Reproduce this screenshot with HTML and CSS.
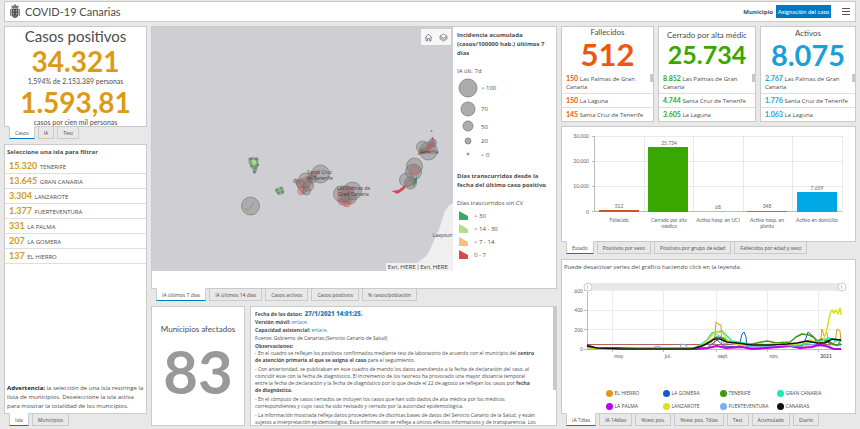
FILE: index.html
```html
<!DOCTYPE html>
<html lang="es">
<head>
    <meta charset="UTF-8">
    <title>COVID-19 Canarias</title>
    <link rel="stylesheet" href="styles.css">
</head>
<body>

    <!-- Cabecera -->
    <header class="cabecera">
        <svg class="escudo" viewBox="0 0 10 15" width="10" height="15">
            <path d="M2 4 L1 1.5 L3 2 L5 0 L7 2 L9 1.5 L8 4 Z" fill="#777"/>
            <path d="M1.5 4.5 H8.5 V10 Q8.500 13 5 14 Q1.500 13 1.500 10 Z" fill="#555"/>
            <path d="M0.500 5 V12 M9.500 5 V12" stroke="#888" fill="none"/>
            <path d="M3.500 6 V7.500 M6.500 6 V7.500 M3.500 9 V10.500 M6.500 9 V10.500 M5 11.500 V12.500" stroke="#bbb" fill="none"/>
        </svg>
        <h1>COVID-19 Canarias</h1>
        <label for="asignacion">Municipio</label>
        <button id="asignacion" class="boton-azul">Asignación del caso</button>
        <button class="menu" aria-label="Menú"><span></span><span></span><span></span></button>
    </header>

    <main class="tablero">

        <!-- Columna izquierda -->
        <div class="columna">
            <section class="panel casos">
                <h2>Casos positivos</h2>
                <p class="cifra">34.321</p>
                <p class="nota">1,594% de 2.153.389 personas</p>
                <p class="cifra">1.593,81</p>
                <p class="nota">casos por cien mil personas</p>
            </section>
            <nav class="tabs">
                <button class="activa">Casos</button>
                <button>IA</button>
                <button>Test</button>
            </nav>
            <section class="panel islas">
                <h3>Seleccione una isla para filtrar</h3>
                <ul>
                    <li><b>15.320</b> TENERIFE</li>
                    <li><b>13.645</b> GRAN CANARIA</li>
                    <li><b>3.304</b> LANZAROTE</li>
                    <li><b>1.377</b> FUERTEVENTURA</li>
                    <li><b>331</b> LA PALMA</li>
                    <li><b>207</b> LA GOMERA</li>
                    <li><b>137</b> EL HIERRO</li>
                </ul>
                <p class="aviso"><b>Advertencia:</b> la selección de una isla restringe la<br>lista de municipios. Deseleccione la isla activa<br>para mostrar la totalidad de los municipios.</p>
            </section>
            <nav class="tabs ultimas">
                <button class="activa">Isla</button>
                <button>Municipios</button>
            </nav>
        </div>

        <!-- Columna central -->
        <div class="columna">
            <section class="panel zona-mapa">
                <div class="mapa">
                    <svg viewBox="0 0 302 244" preserveAspectRatio="xMidYMid slice">
                        <rect width="302" height="244" fill="#cfced3"/>
                        <path d="M302 176 L297 179 L293 185 L290 195 L287 204 L283 212 L279 222 L275 229 L267 235 L251 244 H302 Z" fill="#efeff0"/>
                        <!-- La Palma -->
                        <path d="M97 131 L101 130 L107 131 L107 138 L105 145 L102 147 L100 140 L97 136 Z" fill="#8aa58c"/>
                        <path d="M100 133 L104 133 L105 137 L101 138 Z" fill="#9fdc8c"/>
                        <g fill="#7f9b82" stroke="#5f8265">
                            <circle cx="99" cy="132" r="1"/><circle cx="105" cy="132" r="1"/><circle cx="106" cy="138" r="1"/>
                            <circle cx="100" cy="139" r="1"/><circle cx="103" cy="145" r="1"/><circle cx="104" cy="141" r="1"/>
                        </g>
                        <!-- La Gomera -->
                        <path d="M124 162 L128 160 L133 163 L132 167 L127 168 L124 165 Z" fill="#8fb08f"/>
                        <g fill="none" stroke="#5f8265">
                            <circle cx="125" cy="163" r="1"/><circle cx="130" cy="161" r="1"/><circle cx="131" cy="165" r="1"/><circle cx="127" cy="166" r="1"/>
                        </g>
                        <!-- El Hierro -->
                        <circle class="ia" cx="99" cy="179" r="9"/>
                        <path d="M93 181 L96 184 L99 181 L102 175" fill="none" stroke="#a98f85"/>
                        <circle cx="95" cy="182" r="1" fill="#8fb06f"/>
                        <!-- Tenerife -->
                        <path d="M143 153 L151 151 L160 146 L169 142 L166 148 L160 155 L156 165 L150 167 L146 160 Z" fill="#c98f88"/>
                        <path d="M158 156 L162 158 L158 163 Z" fill="#f0b27c"/>
                        <circle class="ia" cx="169" cy="147" r="9"/>
                        <circle class="ia" cx="154" cy="153" r="7"/>
                        <circle class="ia" cx="149" cy="157" r="4"/>
                        <circle class="ia" cx="157" cy="159" r="5"/>
                        <circle class="rojo" cx="150" cy="164" r="4"/>
                        <circle class="ia" cx="155" cy="164" r="4"/>
                        <circle class="ia" cx="144" cy="154" r="2"/>
                        <circle class="ia" cx="161" cy="152" r="4"/>
                        <!-- Gran Canaria -->
                        <path d="M186 163 L193 158 L202 160 L204 169 L199 177 L193 180 L186 174 Z" fill="#cf8a88"/>
                        <circle class="ia" cx="201" cy="164" r="9"/>
                        <circle class="ia" cx="190" cy="167" r="8"/>
                        <circle class="ia" cx="199" cy="171" r="6"/>
                        <circle class="rojo" cx="190" cy="175" r="3"/>
                        <circle class="rojo" cx="196" cy="177" r="3"/>
                        <circle class="ia" cx="194" cy="171" r="4"/>
                        <!-- Fuerteventura -->
                        <path d="M240 164 L247 163 L255 157 L253 162 L246 167 Z" fill="#dc4450"/>
                        <path d="M262 153 L266 149 L265 156 L261 160 Z" fill="#2f9e64"/>
                        <circle class="ia" cx="263" cy="139" r="8"/>
                        <circle class="ia" cx="262" cy="145" r="8"/>
                        <circle class="ia" cx="255" cy="153" r="7"/>
                        <circle class="ia" cx="259" cy="156" r="6"/>
                        <circle class="rojo" cx="263" cy="144" r="5"/>
                        <circle class="rojo" cx="258" cy="156" r="3"/>
                        <!-- Lanzarote -->
                        <path d="M266 128 L268 122 L277 119 L281 110 L284 116 L277 126 Z" fill="#c97076"/>
                        <circle class="ia" cx="277" cy="124" r="9"/>
                        <circle class="ia" cx="271" cy="120" r="6"/>
                        <circle class="ia" cx="281" cy="116" r="4"/>
                        <circle class="rojo" cx="279" cy="121" r="4"/>
                        <circle cx="280" cy="104" r="1" fill="#8d8795"/>
                        <circle cx="281" cy="111" r="1" fill="#a55a62"/>
                        <g class="lugares">
                            <text x="168" y="147">Santa Cruz</text>
                            <text x="168" y="153">de Tenerife</text>
                            <text x="202" y="163">Las Palmas de</text>
                            <text x="202" y="169">Gran Canaria</text>
                            <text x="278" y="127">Arrecife</text>
                            <text x="291" y="210">Laayoun</text>
                        </g>
                    </svg>
                    <div class="controles">
                        <button aria-label="Inicio"><svg viewBox="0 0 9 9" width="9" height="9"><path d="M1 5 L4.500 1 L8 5 M2 4 V8 H3.500 V5.500 H5.500 V8 H7 V4" fill="none" stroke="#888"/></svg></button>
                        <button aria-label="Capas"><svg viewBox="0 0 9 9" width="9" height="9"><path d="M4.500 1 L8 3 L4.500 5 L1 3 Z M1 4.500 L4.500 6.500 L8 4.500 M1 6 L4.500 8 L8 6 M1 3 V6 M8 3 V6" fill="none" stroke="#999"/></svg></button>
                    </div>
                    <p class="atribucion">Esri, HERE | Esri, HERE</p>
                </div>
                <aside class="leyenda-mapa">
                    <h3>Incidencia acumulada<br>(casos/100000 hab.) últimos 7<br>días</h3>
                    <h4>IA últ. 7d</h4>
                    <ul class="circulos">
                        <li><svg width="22" height="22"><circle cx="11" cy="11" r="9"/></svg>&gt; 100</li>
                        <li><svg width="22" height="20"><circle cx="11" cy="10" r="7"/></svg>70</li>
                        <li><svg width="22" height="15"><circle cx="11" cy="7" r="5"/></svg>50</li>
                        <li><svg width="22" height="14"><circle cx="11" cy="7" r="3"/></svg>20</li>
                        <li><svg width="22" height="13"><circle cx="11" cy="6" r="1"/></svg>&lt; 0</li>
                    </ul>
                    <h3>Días transcurridos desde la<br>fecha del último caso positivo</h3>
                    <h4>Días trascurridos sin CV</h4>
                    <ul class="colores">
                        <li><svg width="10" height="9"><path d="M0 0 L9 5 V9 H0 Z" fill="#3fa568"/></svg>&gt; 30</li>
                        <li><svg width="10" height="9"><path d="M0 0 L9 5 V9 H0 Z" fill="#b5dc86"/></svg>&gt; 14 - 30</li>
                        <li><svg width="10" height="9"><path d="M0 0 L9 5 V9 H0 Z" fill="#f8bd83"/></svg>&gt; 7 - 14</li>
                        <li><svg width="10" height="9"><path d="M0 0 L9 5 V9 H0 Z" fill="#da4750"/></svg>0 - 7</li>
                    </ul>
                </aside>
            </section>
            <nav class="tabs">
                <button class="activa">IA últimos 7 días</button>
                <button>IA últimos 14 días</button>
                <button>Casos activos</button>
                <button>Casos positivos</button>
                <button>% casos/población</button>
            </nav>
            <div class="fila-inferior">
                <section class="panel municipios">
                    <h2>Municipios afectados</h2>
                    <p>83</p>
                </section>
                <section class="panel observaciones">
                    <div class="datos">
                        <p><b>Fecha de los datos: &nbsp;<strong>27/1/2021 14:01:25.</strong></b></p>
                        <p><b>Versión móvil:</b> <a href="#movil">enlace.</a></p>
                        <p><b>Capacidad asistencial:</b> <a href="#capacidad">enlace.</a></p>
                        <p>Fuente: Gobierno de Canarias (Servicio Canario de Salud)</p>
                        <p><b>Observaciones:</b></p>
                    </div>
                    <div class="notas">
                        <p>- En el cuadro se reflejan los positivos confirmados mediante test de laboratorio de acuerdo con el municipio del <b>centro</b><br><b>de atención primaria al que se asigna el caso</b> para el seguimiento.</p>
                        <p>- Con anterioridad, se publicaban en este cuadro de mando los datos atendiendo a la fecha de declaración del caso, al<br>coincidir éste con la fecha de diagnóstico. El incremento de los rastreos ha provocado una mayor distancia temporal<br>entre la fecha de declaración y la fecha de diagnóstico por lo que desde el 22 de agosto se reflejan los casos por <b>fecha</b><br><b>de diagnóstico</b>.</p>
                        <p>- En el cómputo de casos cerrados se incluyen los casos que han sido dados de alta médica por los médicos<br>correspondientes y cuyo caso ha sido revisado y cerrado por la autoridad epidemiológica.</p>
                        <p>- La información mostrada refleja datos procedentes de distintas bases de datos del Servicio Canario de la Salud, y están<br>sujetos a interpretación epidemiológica. Esta información se refleja a únicos efectos informativos y de transparencia. Los</p>
                    </div>
                    <span class="barra-scroll"></span>
                </section>
            </div>
        </div>

        <!-- Columna derecha -->
        <div class="columna">
            <div class="resumen">
                <section class="panel indicador naranja">
                    <h2>Fallecidos</h2>
                    <p class="total">512</p>
                    <ul>
                        <li><b>150</b> Las Palmas de Gran<br>Canaria</li>
                        <li><b>150</b> La Laguna</li>
                        <li><b>145</b> Santa Cruz de Tenerife</li>
                    </ul>
                    <span class="barra-scroll"></span>
                </section>
                <section class="panel indicador verde">
                    <h2>Cerrado por alta médica</h2>
                    <p class="total">25.734</p>
                    <ul>
                        <li><b>8.852</b> Las Palmas de Gran<br>Canaria</li>
                        <li><b>4.744</b> Santa Cruz de Tenerife</li>
                        <li><b>3.605</b> La Laguna</li>
                    </ul>
                    <span class="barra-scroll"></span>
                </section>
                <section class="panel indicador azul">
                    <h2>Activos</h2>
                    <p class="total">8.075</p>
                    <ul>
                        <li><b>2.767</b> Las Palmas de Gran<br>Canaria</li>
                        <li><b>1.776</b> Santa Cruz de Tenerife</li>
                        <li><b>1.063</b> La Laguna</li>
                    </ul>
                    <span class="barra-scroll"></span>
                </section>
            </div>

            <!-- Gráfico de barras -->
            <section class="panel barras">
                <svg class="grafico" viewBox="0 0 293 113">
                    <path d="M32 9.500 H280 M32 34.500 H280 M32 59.500 H280 M82.500 9 V85 M131.500 9 V85 M181.500 9 V85 M230.500 9 V85 M280.500 9 V85" stroke="#e9e9e9"/>
                    <path d="M32.500 9 V85 M30 84.500 H280 M30 9.500 H32 M30 34.500 H32 M30 59.500 H32" stroke="#bbb"/>
                    <rect x="37" y="83" width="40" height="2" fill="#c85a28"/>
                    <rect x="86" y="20" width="40" height="65" fill="#38a800"/>
                    <rect x="185" y="84" width="40" height="1" fill="#00a9e6"/>
                    <rect x="235" y="65" width="40" height="20" fill="#00a9e6"/>
                    <g text-anchor="end">
                        <text x="27" y="11">30.000</text>
                        <text x="27" y="36">20.000</text>
                        <text x="27" y="61">10.000</text>
                        <text x="27" y="87">0</text>
                    </g>
                    <g text-anchor="middle">
                        <text x="57" y="81">512</text>
                        <text x="107" y="18">25.734</text>
                        <text x="156" y="82">68</text>
                        <text x="205" y="81">348</text>
                        <text x="255" y="63">7.659</text>
                        <text x="57" y="95">Fallecido</text>
                        <text x="107" y="95">Cerrado por alta</text>
                        <text x="107" y="101">médica</text>
                        <text x="156" y="95">Activo hosp. en UCI</text>
                        <text x="205" y="95">Activo hosp. en</text>
                        <text x="205" y="101">planta</text>
                        <text x="255" y="95">Activo en domicilio</text>
                    </g>
                </svg>
            </section>
            <nav class="tabs">
                <button class="activa">Estado</button>
                <button>Positivos por sexo</button>
                <button>Positivos por grupo de edad</button>
                <button>Fallecidos por edad y sexo</button>
            </nav>

            <!-- Gráfico de líneas -->
            <section class="panel lineas">
                <p>Puede desactivar series del gráfico haciendo click en la leyenda.</p>
                <svg class="grafico" viewBox="0 0 293 88">
                    <rect x="25" y="3" width="254" height="7" fill="#e8e8e8"/>
                    <path d="M25 10.500 H280 M25 30.500 H280 M25 49.500 H280 M50.500 10 V69 M101.500 10 V69 M154.500 10 V69 M205.500 10 V69 M256.500 10 V69" stroke="#ececec"/>
                    <path d="M25.500 10 V69 M22 69.500 H280 M22 10.500 H25 M22 30.500 H25 M22 49.500 H25 M50.500 69 V72 M101.500 69 V72 M154.500 69 V72 M205.500 69 V72 M256.500 69 V72" stroke="#bbb"/>
                    <path d="M25 64.500 H280" stroke="#b4625f"/>
                    <g fill="none" stroke-width="1" stroke-linejoin="round">
                        <path stroke="#dd9a16" d="M25 67 L60 69 L145 68 L152 66 L154 42 L156 44 L159 45 L160 67 L180 66 L200 64 L205 65 L220 62 L240 66 L258 66 L260 49 L262 56 L265 53 L267 66 L273 62 L275 49 L278 51 L279 62"/>
                        <path stroke="#1359d8" d="M25 65 L35 68 L145 68 L155 60 L162 66 L177 67 L180 54 L182 52 L184 57 L185 67 L215 67 L240 66 L244 58 L246 52 L252 57 L256 66 L265 60 L275 66 L279 60"/>
                        <path stroke="#72b2f0" d="M25 69 L90 68 L95 66 L102 68 L118 68 L119 64 L124 65 L126 68 L145 68 L150 62 L154 54 L160 57 L162 64 L172 62 L178 67 L200 68 L225 66 L245 64 L256 65 L262 60 L270 65 L279 66"/>
                        <path stroke="#bb00ee" stroke-width="2" d="M25 65 L32 68 L55 68 L75 69 L135 69 L146 68 L155 66 L164 68 L180 67 L190 69 L205 68 L228 66 L238 68 L250 67 L256 65 L264 66 L272 69 L279 69"/>
                        <path stroke="#3a9a10" stroke-width="1.500" d="M25 67 L35 68 L62 69 L130 69 L142 65 L150 60 L155 57 L161 58 L170 63 L190 64 L205 61 L215 63 L228 62 L234 57 L240 54 L247 55 L251 57 L256 61 L260 59 L268 63 L274 65 L279 64"/>
                        <path stroke="#1ee8b8" stroke-width="1.500" d="M25 68 L60 69 L130 69 L138 65 L145 60 L150 53 L155 52 L160 51 L164 55 L170 61 L182 63 L200 66 L215 64 L232 66 L250 62 L260 61 L267 58 L275 61 L279 60"/>
                        <path stroke="#dde01c" stroke-width="1.500" d="M25 68 L60 69 L130 69 L140 66 L147 59 L151 54 L156 52 L161 53 L165 60 L172 64 L190 65 L215 64 L238 64 L248 60 L255 63 L261 62 L265 49 L268 34 L270 30 L272 33 L274 30 L276 34 L278 28 L279 35"/>
                        <path stroke="#111" stroke-width="1.500" d="M25 66 L35 68 L60 69 L130 69 L140 66 L148 62 L152 59 L158 59 L165 62 L175 63 L190 65 L210 65 L225 64 L235 63 L245 61 L255 63 L263 63 L270 59 L279 60"/>
                    </g>
                    <g fill="#fff" stroke="#ccc">
                        <circle cx="26" cy="7" r="4"/>
                        <circle cx="280" cy="7" r="4"/>
                        <path d="M25.500 5 V9 M279.500 5 V9"/>
                    </g>
                    <g text-anchor="end">
                        <text x="21" y="13">600</text>
                        <text x="21" y="32">400</text>
                        <text x="21" y="52">200</text>
                        <text x="21" y="71">0</text>
                    </g>
                    <g text-anchor="middle">
                        <text x="57" y="78">may.</text>
                        <text x="106" y="78">jul.</text>
                        <text x="161" y="78">sept.</text>
                        <text x="212" y="78">nov.</text>
                        <text x="264" y="78" font-weight="bold">2021</text>
                    </g>
                </svg>
                <ul class="series">
                    <li class="s-hierro">EL HIERRO</li>
                    <li class="s-gomera">LA GOMERA</li>
                    <li class="s-tenerife">TENERIFE</li>
                    <li class="s-gran">GRAN CANARIA</li>
                    <li class="s-palma">LA PALMA</li>
                    <li class="s-lanzarote">LANZAROTE</li>
                    <li class="s-fuerte">FUERTEVENTURA</li>
                    <li class="s-canarias">CANARIAS</li>
                </ul>
            </section>
            <nav class="tabs ultimas">
                <button class="activa">IA 7días</button>
                <button>IA 14días</button>
                <button>%test pos.</button>
                <button>%test pos. 7días</button>
                <button>Test</button>
                <button>Acumulado</button>
                <button>Diario</button>
            </nav>
        </div>
    </main>

</body>
</html>
```

FILE: styles.css
```css
* {
    box-sizing: border-box;
}
body {
    font-family: "Open Sans", "Liberation Sans", sans-serif;
    margin: 0;
    padding: 1px 4px 3px;
    height: 100vh;
    display: flex;
    flex-direction: column;
    gap: 4px;
    background-color: #e8e8e8;
    color: #4c4c4c;
    font-size: 6px;
    overflow: hidden;
}
h1, h2, h3, h4, p, ul {
    margin: 0;
    padding: 0;
    font-size: inherit;
    font-weight: normal;
}
h1, h2, .cifra, .nota, .total, .municipios p, .boton-azul, .grafico text, li b {
    font-family: Lato, "Liberation Sans", sans-serif;
}
ul {
    list-style: none;
}
button {
    font-family: inherit;
    cursor: pointer;
}
.cabecera {
    display: flex;
    align-items: center;
    height: 21px;
    padding: 0 5px;
    background-color: white;
    border: 1px solid #cacaca;
}
.cabecera h1 {
    flex: 1;
    margin-left: 5px;
    font-size: 11px;
}
.cabecera label {
    font-weight: bold;
}
.boton-azul {
    height: 13px;
    width: 55px;
    margin-left: 3px;
    padding: 0;
    border: none;
    background-color: #0079c1;
    color: white;
    font-size: 6px;
}
.menu {
    display: flex;
    flex-direction: column;
    gap: 2px;
    width: 8px;
    margin-left: 11px;
    padding: 0;
    border: none;
    background: none;
}
.menu span {
    height: 1px;
    background-color: #555;
}
.tablero {
    flex: 1;
    min-height: 0;
    display: grid;
    grid-template-columns: 143fr 406fr 295fr;
    gap: 4px;
}
.columna {
    display: flex;
    flex-direction: column;
    min-width: 0;
    min-height: 0;
}
.panel {
    background-color: white;
    border: 1px solid #cacaca;
    overflow: hidden;
}
.barra-scroll {
    position: absolute;
    top: 0;
    right: 0;
    width: 3px;
    height: 83px;
    background-color: #c8c8c8;
}

/* Pestañas */
.tabs {
    display: flex;
    gap: 3px;
    height: 13px;
    margin: -1px 0 5px 5px;
    position: relative;
    flex-shrink: 0;
}
.tabs.ultimas {
    margin-bottom: 0;
}
.tabs button {
    padding: 0 5px;
    border: 1px solid #cacaca;
    background-color: #e8e8e8;
    color: #4c4c4c;
    font-size: 5px;
    line-height: 10px;
    white-space: nowrap;
}
.tabs .activa {
    background-color: white;
    border-top-color: white;
    border-bottom-color: #0079c1;
}

/* Casos positivos */
.casos {
    height: 101px;
    text-align: center;
}
.casos h2 {
    font-size: 15px;
    line-height: 18px;
}
.casos .cifra {
    color: #dd9a16;
    font-size: 28px;
    font-weight: bold;
    line-height: 32px;
}
.casos .nota {
    font-size: 7px;
    line-height: 9px;
}

/* Islas */
.islas {
    flex: 1;
    display: flex;
    flex-direction: column;
}
.islas h3 {
    padding: 2px;
    font-weight: bold;
    line-height: 10px;
}
.islas li {
    height: 15px;
    padding-left: 4px;
    border-bottom: 1px solid #dedede;
    line-height: 14px;
}
.islas li b {
    margin-right: 1px;
    color: #d09a20;
    font-size: 9px;
}
.aviso {
    margin-top: auto;
    padding: 2px;
    line-height: 9px;
    white-space: nowrap;
}
.aviso b {
    color: #222;
}

/* Mapa */
.zona-mapa {
    flex: 1;
    display: flex;
    min-height: 0;
}
.mapa {
    position: relative;
    flex: 1;
    margin-bottom: 17px;
}
.mapa > svg {
    display: block;
    width: 100%;
    height: 100%;
}
.ia {
    fill: #808080;
    fill-opacity: 0.45;
    stroke: #5e6660;
    stroke-opacity: 0.5;
}
.rojo {
    fill: #c06468;
    fill-opacity: 0.35;
    stroke: #a05055;
    stroke-opacity: 0.3;
}
.lugares text {
    font-size: 5px;
    fill: #444;
    text-anchor: middle;
}
.controles {
    position: absolute;
    top: 2px;
    right: 2px;
    display: flex;
    background-color: #f7f7f7;
}
.controles button {
    width: 15px;
    height: 16px;
    padding: 3px;
    border: none;
    background: none;
    line-height: 0;
}
.atribucion {
    position: absolute;
    right: 0;
    bottom: 0;
    padding: 0 5px 0 2px;
    background-color: #f2f2f2;
    font-family: Lato, "Liberation Sans", sans-serif;
    line-height: 8px;
}
.leyenda-mapa {
    width: 103px;
    padding: 4px;
    white-space: nowrap;
}
.leyenda-mapa h3 {
    font-weight: bold;
    line-height: 9px;
}
.leyenda-mapa h4 {
    margin: 8px 0 1px;
    line-height: 10px;
}
.leyenda-mapa li {
    display: flex;
    align-items: center;
    gap: 2px;
}
.circulos {
    margin-bottom: 11px;
}
.circulos svg {
    fill: #acacac;
    stroke: #8c8c8c;
}
.leyenda-mapa .colores li {
    height: 13px;
    gap: 5px;
    padding-left: 2px;
}

/* Municipios y observaciones */
.fila-inferior {
    display: grid;
    grid-template-columns: 94fr 307fr;
    gap: 5px;
    height: 120px;
}
.municipios {
    text-align: center;
    padding-top: 16px;
}
.municipios h2 {
    font-size: 8px;
    line-height: 12px;
}
.municipios p {
    color: #999;
    font-size: 60px;
    font-weight: bold;
    line-height: 72px;
}
.observaciones {
    position: relative;
    padding: 3px 4px;
    font-size: 5px;
    white-space: nowrap;
}
.datos strong {
    color: #2a7cc0;
    font-size: 6px;
}
.datos p {
    height: 8px;
    line-height: 8px;
}
.observaciones a {
    color: #2a7cc0;
    text-decoration: none;
}
.notas p {
    margin-bottom: 2px;
    line-height: 7px;
}

/* Indicadores */
.resumen {
    display: grid;
    grid-template-columns: 93fr 98fr 96fr;
    gap: 4px;
    height: 96px;
    margin-bottom: 4px;
}
.indicador {
    position: relative;
    display: flex;
    flex-direction: column;
    text-align: center;
    white-space: nowrap;
}
.indicador h2 {
    font-size: 8px;
    line-height: 10px;
}
.indicador .total {
    flex: 1;
    font-weight: bold;
}
.indicador ul {
    text-align: left;
    line-height: 8px;
}
.indicador li {
    padding: 2px 4px;
    border-bottom: 1px solid #dedede;
}
.indicador li:last-child {
    border-bottom: none;
}
.indicador li b {
    font-size: 7px;
}
.indicador .barra-scroll {
    top: 47px;
    height: 8px;
}
.naranja b, .naranja .total { color: #f0560f; }
.verde b, .verde .total { color: #38a800; }
.azul b, .azul .total { color: #1a9fda; }
.naranja .total {
    font-size: 31px;
    line-height: 34px;
}
.verde .total {
    font-size: 25px;
    line-height: 23px;
}
.azul .total {
    font-size: 29px;
    line-height: 32px;
}
.verde h2 {
    margin: 0 8px;
    overflow: hidden;
    text-align: left;
    line-height: 16px;
}
.azul h2 {
    line-height: 12px;
}

/* Gráficos */
.grafico {
    display: block;
    width: 100%;
}
.grafico text {
    font-size: 5px;
    fill: #666;
}
.barras {
    height: 116px;
}
.lineas {
    flex: 1;
    display: flex;
    flex-direction: column;
}
.lineas p {
    padding: 2px 2px 7px;
    line-height: 11px;
}
.series {
    display: grid;
    grid-template-columns: repeat(4, 57px);
    justify-content: center;
    margin-top: auto;
    padding-left: 22px;
    font-size: 5px;
    line-height: 13px;
    white-space: nowrap;
}
.series li::before {
    content: "";
    display: inline-block;
    width: 7px;
    height: 7px;
    margin-right: 2px;
    border-radius: 50%;
    vertical-align: middle;
    background-color: currentColor;
}
.s-hierro::before { color: #dd9a16; }
.s-gomera::before { color: #1359d8; }
.s-tenerife::before { color: #3a9a10; }
.s-gran::before { color: #1ee8b8; }
.s-palma::before { color: #bb00ee; }
.s-lanzarote::before { color: #dde01c; }
.s-fuerte::before { color: #72b2f0; }
.s-canarias::before { color: #111; }
```
